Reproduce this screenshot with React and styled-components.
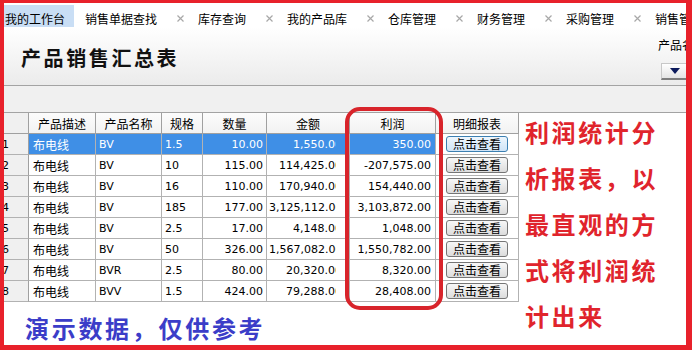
import React from "react";
import styled, { createGlobalStyle } from "styled-components";

const GlobalStyle = createGlobalStyle`
  html, body {
    margin: 0;
    padding: 0;
    width: 692px;
    height: 350px;
    overflow: hidden;
    background: #fff;
  }
  body {
    font-family: "Noto Sans CJK SC", sans-serif;
    font-size: 12px;
    color: #000;
  }
`;

const Page = styled.div`
  position: relative;
  width: 692px;
  height: 350px;
  overflow: hidden;
  background: #fff;
  display: flex;
  flex-direction: column;
`;

// red annotation frame drawn over the screenshot
const Frame = styled.div`
  position: absolute;
  inset: 0;
  border-style: solid;
  border-color: #e8212b;
  border-width: 3px 6px 5px 4px;
  pointer-events: none;
  z-index: 5;
`;

const Highlight = styled.div`
  position: absolute;
  left: 345px;
  top: 107px;
  width: 98px;
  height: 203px;
  box-sizing: border-box;
  border: 4px solid #d8242b;
  border-radius: 15px;
  pointer-events: none;
  z-index: 4;
`;

const TabBar = styled.div`
  display: flex;
  height: 27px;
  box-sizing: border-box;
  padding: 5px 0 0 4px;
  gap: 11px;
  white-space: nowrap;
  flex-shrink: 0;
`;

const Tab = styled.div`
  display: flex;
  align-items: flex-end;
  gap: 20px;
  padding: 0 ${(p) => (p.$active ? "9px" : "3px")} 1px ${(p) => (p.$active ? "1px" : "0")};
  background: ${(p) => (p.$active ? "#c9def5" : "transparent")};
  font-size: 12px;
  line-height: 14px;
  flex-shrink: 0;
`;

const Close = styled.svg`
  width: 7px;
  height: 7px;
  margin-bottom: 4px;
`;

const Header = styled.div`
  display: flex;
  justify-content: space-between;
  height: 58px;
  flex-shrink: 0;
  border-bottom: 1px solid #a3a3a3;
  background: linear-gradient(#ffffff, #ebebeb);
`;

const Title = styled.h1`
  margin: 0;
  align-self: center;
  padding: 2px 0 0 21px;
  font-size: 20px;
  font-weight: 700;
  letter-spacing: 2.6px;
  color: #111;
`;

const Filter = styled.div`
  width: 36px;
  flex-shrink: 0;
  padding-top: 11px;
  white-space: nowrap;
`;

const FilterLabel = styled.div`
  font-size: 12px;
  line-height: 14px;
  padding-left: 2px;
`;

const Dropdown = styled.div`
  margin: 11px 0 0 5px;
  width: 40px;
  height: 17px;
  box-sizing: border-box;
  border: 1px solid #c8c8c8;
  border-bottom: 2px solid #7d7d7d;
  background: linear-gradient(#ffffff, #e4e4e4);
  display: flex;
  align-items: center;
  padding-left: 8px;
`;

const Toolbar = styled.div`
  height: 26px;
  flex-shrink: 0;
  background: #f0f0f0;
  border-bottom: 1px solid #a3a3a3;
`;

const Main = styled.div`
  display: flex;
  flex: 1;
  min-height: 0;
`;

const LeftCol = styled.div`
  width: 519px;
  flex-shrink: 0;
`;

const Grid = styled.div`
  display: grid;
  grid-template-columns: 29px 67px 66px 41px 64px 83px 86px 83px;
  grid-auto-rows: 21px;
  font-family: "DejaVu Sans", "Noto Sans CJK SC", sans-serif;
  font-size: 11px;
`;

const HeadCell = styled.div`
  box-sizing: border-box;
  border-right: 1px solid #a0a0a0;
  border-bottom: 1px solid #a0a0a0;
  background: ${(p) => (p.$corner ? "#f0f0f0" : "linear-gradient(#fcfcfc, #f2f2f2)")};
  display: flex;
  align-items: center;
  justify-content: center;
  font-family: "Noto Sans CJK SC", sans-serif;
  font-size: 12px;
`;

const Cell = styled.div`
  box-sizing: border-box;
  border-right: 1px solid #b2b2b2;
  border-bottom: 1px solid #b2b2b2;
  background: ${(p) => (p.$selected ? "#3f8fe6" : "#fff")};
  color: ${(p) => (p.$selected ? "#fff" : "#000")};
  display: flex;
  align-items: center;
  justify-content: ${(p) => (p.$align === "right" ? "flex-end" : "flex-start")};
  padding: ${(p) => p.$pad || "0 3px"};
  font-family: ${(p) =>
    p.$cjk ? '"Noto Sans CJK SC", sans-serif' : '"DejaVu Sans", "Noto Sans CJK SC", sans-serif'};
  font-size: ${(p) => (p.$cjk ? "12px" : "11px")};
  white-space: nowrap;
  overflow: hidden;
`;

const RowHead = styled.div`
  box-sizing: border-box;
  border-right: 1px solid #a0a0a0;
  border-bottom: 1px solid #b2b2b2;
  background: #f0f0f0;
  display: flex;
  align-items: center;
  padding-left: 2px;
`;

const Clip = styled.div`
  flex: 1;
  min-width: 0;
  overflow: hidden;
`;

const ClipText = styled.div`
  margin-right: -6px;
  text-align: right;
`;

const ViewButton = styled.button`
  width: 62px;
  height: 16px;
  padding: 0;
  box-sizing: border-box;
  border: 1px solid ${(p) => (p.$selected ? "#3c7fb1" : "#757575")};
  border-radius: 3px;
  background: ${(p) =>
    p.$selected ? "linear-gradient(#eef6fd, #cfe4f7)" : "linear-gradient(#f7f7f7, #dcdcdc)"};
  font-family: "Noto Sans CJK SC", sans-serif;
  font-size: 12px;
  line-height: 14px;
  color: #000;
`;

const DemoNote = styled.div`
  margin-top: 11px;
  padding-left: 25px;
  font-size: 24px;
  font-weight: 700;
  letter-spacing: 2.7px;
  line-height: 30px;
  color: #3b3dc8;
  white-space: nowrap;
`;

const Annotation = styled.div`
  margin-top: -4px;
  padding-left: 6px;
  font-size: 24px;
  font-weight: 700;
  letter-spacing: 2.6px;
  line-height: 46px;
  color: #e0242c;
  white-space: nowrap;
`;

const tabs = ["销售单据查找", "库存查询", "我的产品库", "仓库管理", "财务管理", "采购管理", "销售管理"];

const columns = ["产品描述", "产品名称", "规格", "数量", "金额", "利润", "明细报表"];

const rows = [
  ["1", "布电线", "BV", "1.5", "10.00", "1,550.00", "350.00"],
  ["2", "布电线", "BV", "10", "115.00", "114,425.00", "-207,575.00"],
  ["3", "布电线", "BV", "16", "110.00", "170,940.00", "154,440.00"],
  ["4", "布电线", "BV", "185", "177.00", "3,125,112.00", "3,103,872.00"],
  ["5", "布电线", "BV", "2.5", "17.00", "4,148.00", "1,048.00"],
  ["6", "布电线", "BV", "50", "326.00", "1,567,082.00", "1,550,782.00"],
  ["7", "布电线", "BVR", "2.5", "80.00", "20,320.00", "8,320.00"],
  ["8", "布电线", "BVV", "1.5", "424.00", "79,288.00", "28,408.00"],
];

const notes = ["利润统计分", "析报表，以", "最直观的方", "式将利润统", "计出来"];

function CloseIcon() {
  return (
    <Close viewBox="0 0 7 7">
      <path d="M0.5 0.5L6.5 6.5M6.5 0.5L0.5 6.5" stroke="#a8a8a8" strokeWidth="1.2" />
    </Close>
  );
}

function App() {
  return (
    <Page>
      <GlobalStyle />
      <TabBar>
        <Tab $active>我的工作台</Tab>
        {tabs.map((t) => (
          <Tab key={t}>
            {t}
            <CloseIcon />
          </Tab>
        ))}
      </TabBar>

      <Header>
        <Title>产品销售汇总表</Title>
        <Filter>
          <FilterLabel>产品名称</FilterLabel>
          <Dropdown>
            <svg width="10" height="6" viewBox="0 0 10 6">
              <path d="M0 0H10L5 6Z" fill="#0c1a5c" />
            </svg>
          </Dropdown>
        </Filter>
      </Header>

      <Toolbar />

      <Main>
        <LeftCol>
          <Grid>
            <HeadCell $corner />
            {columns.map((c) => (
              <HeadCell key={c}>{c}</HeadCell>
            ))}
            {rows.map((r, i) => {
              const sel = i === 0;
              return (
                <React.Fragment key={r[0]}>
                  <RowHead>{r[0]}</RowHead>
                  <Cell $selected={sel} $cjk $pad="0 4px">
                    {r[1]}
                  </Cell>
                  <Cell $selected={sel}>{r[2]}</Cell>
                  <Cell $selected={sel}>{r[3]}</Cell>
                  <Cell $selected={sel} $align="right">
                    {r[4]}
                  </Cell>
                  <Cell $selected={sel} $align="right" $pad="0 13px 0 2px">
                    <Clip>
                      <ClipText>{r[5]}</ClipText>
                    </Clip>
                  </Cell>
                  <Cell $selected={sel} $align="right" $pad="0 4px 0 2px">
                    {r[6]}
                  </Cell>
                  <Cell $pad="0 0 0 10px">
                    <ViewButton $selected={sel}>点击查看</ViewButton>
                  </Cell>
                </React.Fragment>
              );
            })}
          </Grid>
          <DemoNote>演示数据，仅供参考</DemoNote>
        </LeftCol>
        <Annotation>
          {notes.map((n) => (
            <div key={n}>{n}</div>
          ))}
        </Annotation>
      </Main>

      <Highlight />
      <Frame />
    </Page>
  );
}

export default App;
